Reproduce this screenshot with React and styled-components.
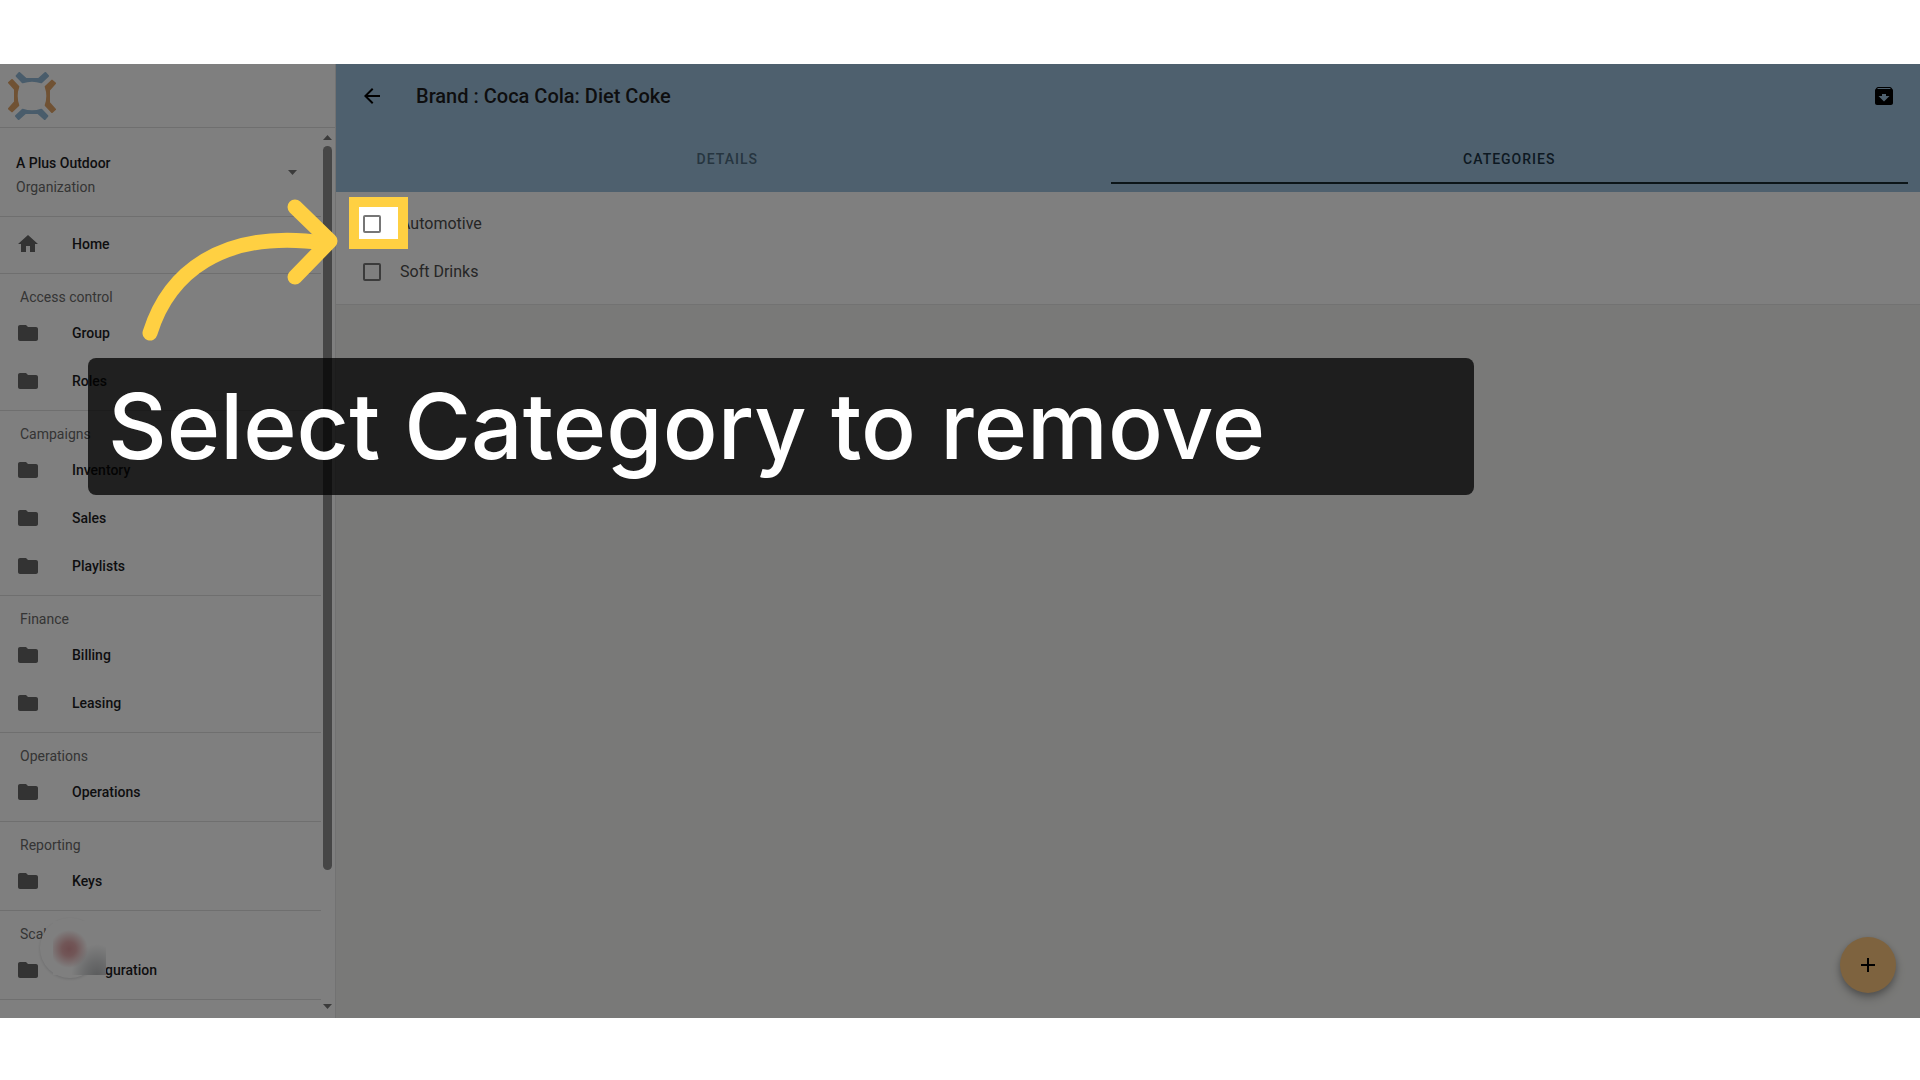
import React from "react";
import styled, { createGlobalStyle } from "styled-components";

const GlobalStyle = createGlobalStyle`
  * { box-sizing: border-box; }
  body {
    margin: 0;
    background: #fff;
    color: #1d1d1f;
    font-family: Roboto, "Liberation Sans", sans-serif;
    font-size: 14px;
  }
  button, input, a { font: inherit; color: inherit; }
`;

const Page = styled.main`
  min-height: 100vh;
  padding: 64px 0 62px;
  display: flex;
`;

const Stage = styled.div`
  flex: 1;
  display: flex;
  position: relative;
  overflow: hidden;
`;

const Sidebar = styled.aside`
  flex: 0 0 336px;
  display: flex;
  flex-direction: column;
  background: #fff;
  border-right: 1px solid #e4e4e4;
`;

const LogoBar = styled.div`
  height: 64px;
  padding: 8px;
  border-bottom: 1px solid #dedede;
`;

const SidebarBody = styled.div`
  flex: 1;
  display: flex;
`;

const Nav = styled.nav`
  flex: 1;
`;

const OrgButton = styled.button`
  width: 100%;
  height: 88px;
  padding: 0 24px 0 16px;
  display: flex;
  align-items: center;
  justify-content: space-between;
  border: 0;
  background: none;
  text-align: left;
`;

const OrgText = styled.span`
  display: grid;
  padding-top: 6px;
  line-height: 24px;
`;

const OrgName = styled.span`
  font-weight: 500;
`;

const OrgKind = styled.span`
  color: #6a6a6a;
`;

const Section = styled.section`
  border-top: 1px solid #dedede;
  padding: ${(p) => (p.$plain ? "3px 0 5px" : "11px 0 5px")};
`;

const SectionTitle = styled.h2`
  margin: 0;
  padding-left: 20px;
  font-size: 14px;
  font-weight: 400;
  line-height: 24px;
  color: #6a6a6a;
`;

const NavLink = styled.a`
  height: 48px;
  padding: 0 16px;
  display: flex;
  align-items: center;
  gap: 32px;
  font-weight: 500;
  text-decoration: none;

  svg { fill: #666; }
`;

const ScrollTrack = styled.div`
  width: 14px;
  padding: 7px 3px 8px 2px;
  display: flex;
  flex-direction: column;
  justify-content: space-between;
`;

const ScrollTop = styled.div`
  flex: 0 0 76%;
  display: flex;
  flex-direction: column;
  gap: 5px;
`;

const ScrollBottom = styled.div`
  height: 6px;
  display: flex;
`;

const ScrollThumb = styled.div`
  width: 9px;
  min-height: 724px;
  border-radius: 5px;
  background: #8c8c8c;
`;

const Content = styled.div`
  flex: 1;
  display: flex;
  flex-direction: column;
  background: #f3f3f0;
`;

const AppBar = styled.header`
  background: #9dc1dc;
`;

const TitleRow = styled.div`
  height: 64px;
  padding: 0 24px;
  display: flex;
  align-items: center;
`;

const IconButton = styled.button`
  width: 24px;
  height: 24px;
  padding: 0;
  border: 0;
  background: none;
  display: grid;
  place-items: center;
`;

const Title = styled.h1`
  flex: 1;
  margin: 0 32px;
  font-size: 20px;
  line-height: 32px;
  font-weight: 500;
`;

const Tabs = styled.div`
  height: 64px;
  padding: 0 12px 8px 8px;
  display: flex;
`;

const Tab = styled.button`
  flex: 1 1 auto;
  padding: 8px 16px 0;
  border: 0;
  border-bottom: 2px solid ${(p) => (p.$active ? "#182a30" : "transparent")};
  background: none;
  font-size: 14px;
  font-weight: 500;
  letter-spacing: 1px;
  text-transform: uppercase;
  color: ${(p) => (p.$active ? "#1b3344" : "#4c6a80")};
`;

const CategoryList = styled.ul`
  margin: 0;
  padding: 8px 24px;
  list-style: none;
  background: #fff;
  border-bottom: 1px solid #e4e4e4;
`;

const CategoryRow = styled.li`
  height: 48px;
  display: flex;
  align-items: center;
`;

const CategoryLabel = styled.label`
  display: flex;
  align-items: center;
  gap: 19px;
  padding-left: 3px;
  font-size: 16px;
  line-height: 24px;
  color: #4c4c4c;
`;

const Checkbox = styled.input`
  appearance: none;
  width: 18px;
  height: 18px;
  margin: 0;
  border: 2px solid #767676;
  border-radius: 2px;
  background: #fff;
`;

const AddButton = styled.button`
  position: absolute;
  right: 24px;
  bottom: 25px;
  width: 56px;
  height: 56px;
  padding: 0;
  border: 0;
  border-radius: 50%;
  display: grid;
  place-items: center;
  background: #fcc67e;
  box-shadow: 0 3px 6px rgba(0, 0, 0, 0.25), 0 6px 12px rgba(0, 0, 0, 0.15);
`;

const ChatBubble = styled.div`
  position: absolute;
  left: 40px;
  bottom: 40px;
  width: 60px;
  height: 60px;
  border-radius: 50%;
  background: #fff;
  box-shadow: 0 1px 3px rgba(0, 0, 20, 0.15);
`;

const ChatPreview = styled.div`
  position: absolute;
  left: 53px;
  bottom: 43px;
  width: 53px;
  height: 54px;
  background:
    radial-gradient(circle at 16px 28px, #dc9a9e 0, #e4adaf 7px, rgba(240, 205, 205, 0) 19px),
    radial-gradient(ellipse at 44px 56px, #b4b6b8 0, rgba(200, 202, 204, 0.8) 12px, rgba(255, 255, 255, 0) 26px),
    #fff;
`;

const Spotlight = styled.div`
  position: absolute;
  left: 349px;
  top: 133px;
  width: 59px;
  height: 52px;
  border: 10px solid #ffd042;
  box-shadow: 0 0 0 2000px rgba(0, 0, 0, 0.5);
  pointer-events: none;
`;

const Pointer = styled.svg`
  position: absolute;
  left: 130px;
  top: 116px;
  fill: none;
  stroke: #ffd042;
  stroke-width: 15;
  stroke-linecap: round;
  stroke-linejoin: round;
`;

const Caption = styled.p`
  position: absolute;
  left: 88px;
  right: 446px;
  top: 294px;
  margin: 0;
  padding: 12px 20px;
  border-radius: 8px;
  background: rgba(0, 0, 0, 0.75);
  color: #fff;
  font-family: Inter, "Open Sans", sans-serif;
  font-size: 91px;
  line-height: 113px;
  font-weight: 500;
  white-space: nowrap;
`;

const Icon = ({ d }) => (
  <svg width="24" height="24" viewBox="0 0 24 24" aria-hidden="true">
    <path d={d} />
  </svg>
);

const Arrow = ({ d }) => (
  <svg width="9" height="6" viewBox="0 0 9 6" aria-hidden="true">
    <path d={d} fill="#777" />
  </svg>
);

const ICONS = {
  folder: "M10 4H4c-1.100 0-2 .9-2 2v12c0 1.100.9 2 2 2h16c1.100 0 2-.9 2-2V8c0-1.100-.9-2-2-2h-8z",
  home: "M10 20v-6h4v6h5v-8h3L12 3 2 12h3v8z",
  back: "M20 11H7.830l5.590-5.590L12 4l-8 8 8 8 1.410-1.410L7.830 13H20v-2z",
  archive:
    "M20.540 5.230l-1.390-1.680C18.880 3.210 18.470 3 18 3H6c-.47 0-.88.21-1.160.55L3.460 5.230C3.170 5.570 3 6.020 3 6.500V19c0 1.100.9 2 2 2h14c1.100 0 2-.9 2-2V6.500c0-.48-.17-.93-.46-1.270zM12 17.500L6.500 12H10v-2h4v2h3.500L12 17.500zM5.120 5l.81-1h12l.94 1H5.120z",
  add: "M19 13h-6v6h-2v-6H5v-2h6V5h2v6h6z",
};

const SECTIONS = [
  { title: "Access control", items: ["Group", "Roles"] },
  { title: "Campaigns", items: ["Inventory", "Sales", "Playlists"] },
  { title: "Finance", items: ["Billing", "Leasing"] },
  { title: "Operations", items: ["Operations"] },
  { title: "Reporting", items: ["Keys"] },
  { title: "Scala", items: ["Configuration"] },
];

const BRACKET =
  "M58 68 L50 77 L68 96 C85 90 107 90 124 96 L144 77 L136 68 L116 86 L78 86 Z";

const Logo = () => (
  <svg width="48" height="48" viewBox="24 65 144 144" role="img" aria-label="Logo">
    {[0, 90, 180, 270].map((turn) => {
      const color = turn % 180 ? "#e0a468" : "#93b9d6";
      return (
        <path
          key={turn}
          d={BRACKET}
          fill={color}
          stroke={color}
          strokeWidth="6"
          strokeLinejoin="round"
          transform={`rotate(${turn} 96 137)`}
        />
      );
    })}
  </svg>
);

export default function App() {
  return (
    <Page>
      <GlobalStyle />
      <Stage>
        <Sidebar>
          <LogoBar>
            <Logo />
          </LogoBar>
          <SidebarBody>
            <Nav>
              <OrgButton type="button">
                <OrgText>
                  <OrgName>A Plus Outdoor</OrgName>
                  <OrgKind>Organization</OrgKind>
                </OrgText>
                <Arrow d="M0 1h9L4.500 6z" />
              </OrgButton>
              <Section $plain>
                <NavLink href="#home">
                  <Icon d={ICONS.home} />
                  Home
                </NavLink>
              </Section>
              {SECTIONS.map(({ title, items }) => (
                <Section key={title}>
                  <SectionTitle>{title}</SectionTitle>
                  {items.map((item) => (
                    <NavLink key={item} href={`#${item.toLowerCase()}`}>
                      <Icon d={ICONS.folder} />
                      {item}
                    </NavLink>
                  ))}
                </Section>
              ))}
              <Section $plain />
            </Nav>
            <ScrollTrack>
              <ScrollTop>
                <Arrow d="M0 5h9L4.500 0z" />
                <ScrollThumb />
              </ScrollTop>
              <ScrollBottom>
                <Arrow d="M0 0h9L4.500 5z" />
              </ScrollBottom>
            </ScrollTrack>
          </SidebarBody>
        </Sidebar>

        <Content>
          <AppBar>
            <TitleRow>
              <IconButton type="button" aria-label="Back">
                <Icon d={ICONS.back} />
              </IconButton>
              <Title>Brand : Coca Cola: Diet Coke</Title>
              <IconButton type="button" aria-label="Archive">
                <Icon d={ICONS.archive} />
              </IconButton>
            </TitleRow>
            <Tabs role="tablist">
              <Tab type="button" role="tab" aria-selected="false">Details</Tab>
              <Tab type="button" role="tab" aria-selected="true" $active>Categories</Tab>
            </Tabs>
          </AppBar>
          <CategoryList>
            {["Automotive", "Soft Drinks"].map((name) => (
              <CategoryRow key={name}>
                <CategoryLabel>
                  <Checkbox type="checkbox" />
                  {name}
                </CategoryLabel>
              </CategoryRow>
            ))}
          </CategoryList>
        </Content>

        <AddButton type="button" aria-label="Add category">
          <Icon d={ICONS.add} />
        </AddButton>
        <ChatBubble />
        <ChatPreview />
        <Spotlight />
        <Pointer width="220" height="170" viewBox="130 180 220 170" aria-hidden="true">
          <path d="M150 333 C168 275 220 228 325 243" />
          <path d="M295 207 L330 241 L295 277" />
        </Pointer>
        <Caption>Select Category to remove</Caption>
      </Stage>
    </Page>
  );
}
